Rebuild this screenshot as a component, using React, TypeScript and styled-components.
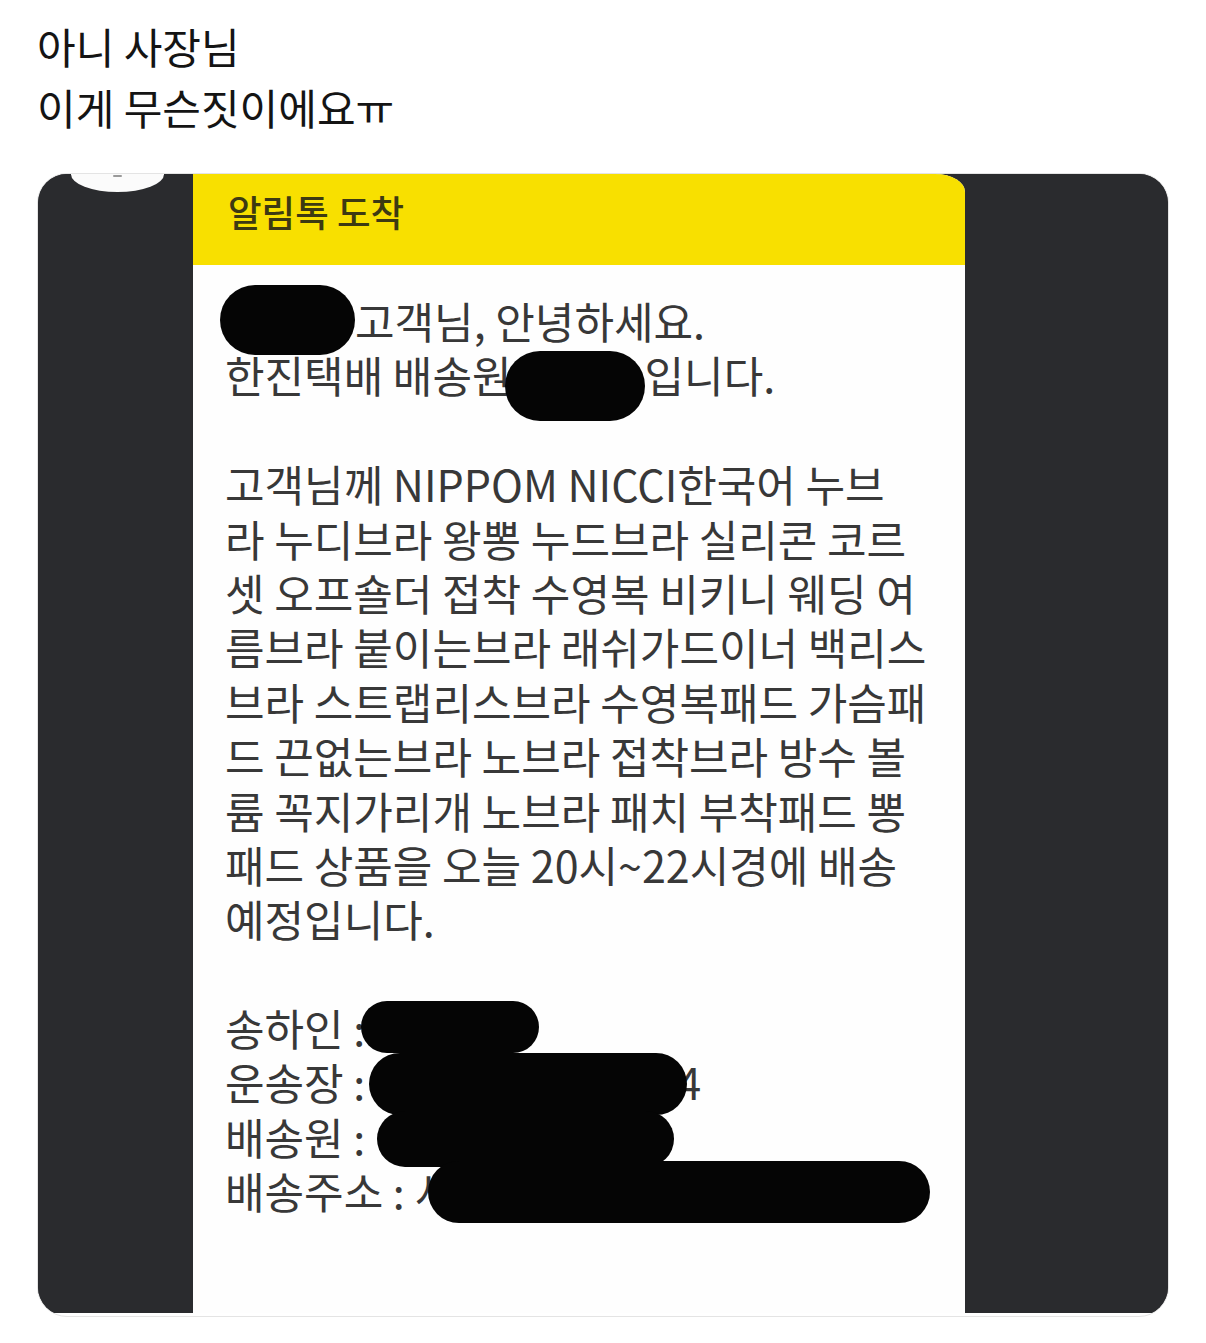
import * as React from "react";
import styled, { createGlobalStyle } from "styled-components";

const GlobalStyle = createGlobalStyle`
  body {
    margin: 0;
    background: #ffffff;
    font-family: "Noto Sans CJK KR", "Noto Sans", sans-serif;
  }
`;

const Page = styled.div`
  width: 1206px;
  height: 1343px;
  background: #fff;
  overflow: hidden;
`;

const Caption = styled.div`
  padding: 15px 37px 0;
  font-size: 42px;
  line-height: 61px;
  color: #141414;
`;

const Card = styled.div`
  margin: 36px 37px 0;
  border: 1px solid #e4e4e4;
  border-radius: 30px;
  overflow: hidden;
  background: #fff;
  padding-bottom: 3px;
`;

const Photo = styled.div`
  display: grid;
  grid-template-columns: 155px 772px 1fr;
  height: 1139px;
  background: #2a2b2e;
`;

const SidePanel = styled.div`
  background: #2a2b2e;
`;

const AvatarEdge = styled.div`
  margin-left: 33px;
  width: 93px;
  height: 18px;
  background: #fbfbfb;
  border-radius: 0 0 47px 47px / 0 0 18px 18px;
  display: flex;
  justify-content: center;
`;

const AvatarMark = styled.div`
  width: 9px;
  height: 2px;
  margin-top: 1px;
  border-radius: 1px;
  background: #9a9a9a;
`;

const Message = styled.div`
  display: flex;
  flex-direction: column;
  background: #fefefe;
  border-top-right-radius: 30px 18px;
  overflow: hidden;
`;

const Header = styled.div`
  height: 91px;
  box-sizing: border-box;
  padding: 18px 0 0 35px;
  background: #f8e000;
  font-size: 36.5px;
  line-height: 40px;
  font-weight: 500;
  color: #3d3a12;
`;

const Body = styled.div`
  padding: 28px 0 0 32px;
  font-size: 43px;
  line-height: 54.4px;
  color: #383838;
`;

const Line = styled.div`
  height: 54.4px;
  white-space: nowrap;
`;

const Redaction = styled.span<{ $w: number; $h: number; $dx?: number; $dy?: number }>`
  position: relative;
  display: inline-block;
  width: ${({ $w }) => $w}px;
  height: ${({ $h }) => $h}px;
  margin: -20px 0 -20px ${({ $dx }) => $dx ?? 0}px;
  vertical-align: middle;
  top: ${({ $dy }) => $dy ?? 0}px;
  background: #050505;
  border-radius: ${({ $h }) => $h / 2}px;
  filter: blur(0.6px);
`;

const Peek = styled.span<{ $dx: number }>`
  margin-left: ${({ $dx }) => $dx}px;
`;

const bodyLines = [
  "고객님께 NIPPOM NICCI한국어 누브",
  "라 누디브라 왕뽕 누드브라 실리콘 코르",
  "셋 오프숄더 접착 수영복 비키니 웨딩 여",
  "름브라 붙이는브라 래쉬가드이너 백리스",
  "브라 스트랩리스브라 수영복패드 가슴패",
  "드 끈없는브라 노브라 접착브라 방수 볼",
  "륨 꼭지가리개 노브라 패치 부착패드 뽕",
  "패드 상품을 오늘 20시~22시경에 배송",
  "예정입니다.",
];

const App = () => {
  return (
    <Page>
      <GlobalStyle />
      <Caption>
        <div>아니 사장님</div>
        <div>이게 무슨짓이에요ㅠ</div>
      </Caption>
      <Card>
        <Photo>
          <SidePanel>
            <AvatarEdge>
              <AvatarMark />
            </AvatarEdge>
          </SidePanel>
          <Message>
            <Header>알림톡 도착</Header>
            <Body>
              <Line>
                <Redaction $w={135} $h={70} $dx={-5} $dy={-7} />
                고객님, 안녕하세요.
              </Line>
              <Line>
                한진택배 배송원
                <Redaction $w={140} $h={70} $dx={-7} $dy={4} />
                입니다.
              </Line>
              <Line />
              {bodyLines.map((text) => (
                <Line key={text}>{text}</Line>
              ))}
              <Line />
              <Line>
                송하인 :<Redaction $w={178} $h={52} $dx={-4} $dy={-7} />
              </Line>
              <Line>
                운송장 :<Redaction $w={318} $h={62} $dx={4} $dy={-5} />
                <Peek $dx={-10}>4</Peek>
              </Line>
              <Line>
                배송원 :<Redaction $w={297} $h={56} $dx={12} $dy={-4} />
              </Line>
              <Line>
                배송주소 : 서<Redaction $w={502} $h={62} $dx={-26} $dy={-6} />
              </Line>
            </Body>
          </Message>
          <SidePanel />
        </Photo>
      </Card>
    </Page>
  );
};

export default App;
